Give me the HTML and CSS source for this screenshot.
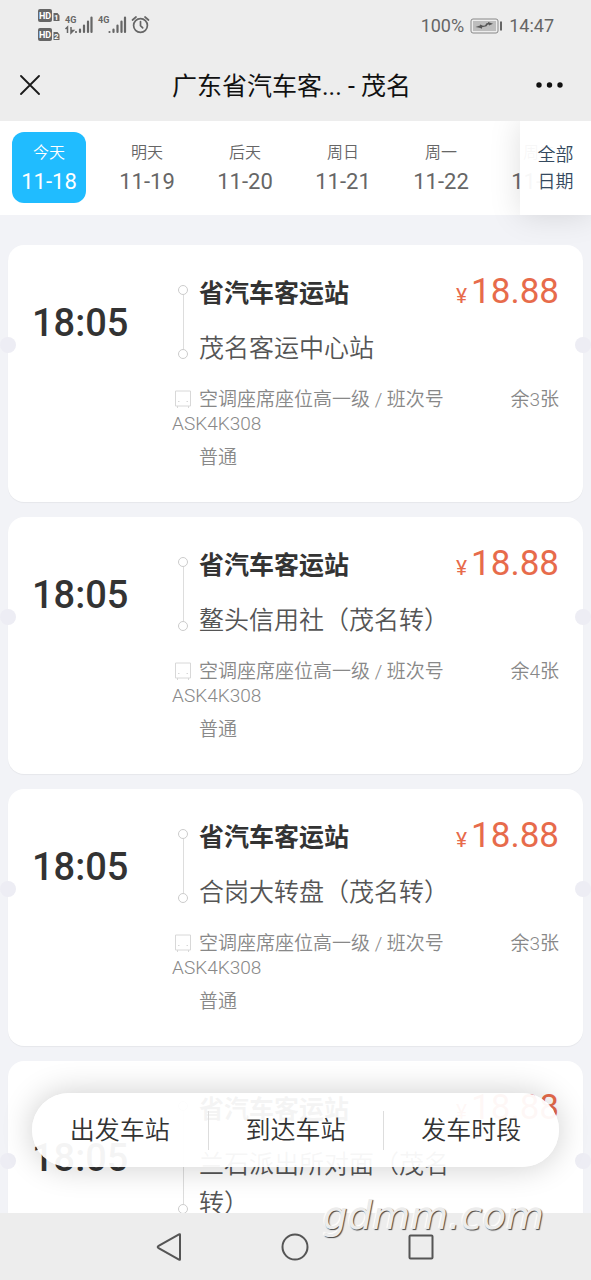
FILE: index.html
```html
<!DOCTYPE html>
<html lang="zh-CN">
<head>
<meta charset="utf-8">
<meta name="viewport" content="width=device-width, initial-scale=1">
<title>广东省汽车客... - 茂名</title>
<link rel="stylesheet" href="styles.css">
</head>
<body>
<div class="app">
  <header class="header">
    <div class="status">
      <svg class="status-icons" width="112" height="34" viewBox="0 0 112 34" aria-hidden="true">
        <g fill="#666">
          <rect x="0" y="0" width="14" height="13" rx="2"/>
          <rect x="0" y="19" width="14" height="13" rx="2"/>
          <path d="M15.500 4h4l2 2.500v5.500h-6zM15.500 23h4l2 2.500v5.500h-6z"/>
          <g class="svg-hd"><text x="1" y="10">HD</text><text x="1" y="29">HD</text></g>
          <g class="svg-num"><text x="16" y="11">1</text><text x="16" y="30">2</text></g>
          <g class="svg-4g"><text x="27" y="14">4G</text><text x="60" y="14">4G</text></g>
        </g>
        <g stroke="#666" stroke-width="2.200" stroke-linecap="round" fill="none">
          <path d="M38 23v0M42 20.500v2.500M46 16.500v6.500M50 12.500v10.500M53.500 8.500v14.500"/>
          <path d="M71.500 23v0M75.500 20.500v2.500M79.500 16.500v6.500M83.500 12.500v10.500M87 8.500v14.500"/>
        </g>
        <path d="M27.500 20l2-2v6M33 18v6l2.500-2.500h-2.500" stroke="#666" stroke-width="1.500" fill="none"/>
        <g stroke="#666" stroke-width="1.700" fill="none" stroke-linecap="round">
          <circle cx="102.500" cy="16.500" r="6.900"/>
          <path d="M102.500 12.500v4.200l2.200 2.200M94.500 11l3.500-3M110.500 11l-3.500-3"/>
        </g>
      </svg>
      <div class="status-right">
        <span>100%</span>
        <svg width="33" height="16" viewBox="0 0 33 16" aria-hidden="true">
          <rect x="1" y="1" width="27" height="14" rx="2" fill="#ededed" stroke="#888"/>
          <rect x="3" y="3" width="23" height="10" fill="#bdbdbd"/>
          <path d="M5.500 9l4.500-1.500v-1l3 1.200 2-.2 1.500-2.300 1.500-.2v-1l5 1.800-4 1.700v-1l-1.500.3-1 1.500-4.500 1v1.500l-2.500-1z" fill="#555"/>
          <rect x="30" y="3.500" width="2" height="9" fill="#666"/>
        </svg>
        <span>14:47</span>
      </div>
    </div>
    <div class="titlebar">
      <button class="icon-button" aria-label="关闭">
        <svg width="20" height="20" viewBox="0 0 20 20"><path d="M1 1l18 18M19 1L1 19" stroke="#1a1a1a" stroke-width="1.800" stroke-linecap="round"/></svg>
      </button>
      <h1 class="title">广东省汽车客... - 茂名</h1>
      <button class="icon-button more" aria-label="更多">
        <svg width="27" height="6" viewBox="0 0 27 6" fill="#111"><circle cx="3" cy="3" r="2.700"/><circle cx="13.500" cy="3" r="2.700"/><circle cx="24" cy="3" r="2.700"/></svg>
      </button>
    </div>
  </header>

  <nav class="dates" aria-label="日期">
    <div class="date-strip">
      <button class="date active"><span class="day">今天</span><span class="num">11-18</span></button>
      <button class="date"><span class="day">明天</span><span class="num">11-19</span></button>
      <button class="date"><span class="day">后天</span><span class="num">11-20</span></button>
      <button class="date"><span class="day">周日</span><span class="num">11-21</span></button>
      <button class="date"><span class="day">周一</span><span class="num">11-22</span></button>
      <button class="date"><span class="day">周二</span><span class="num">11-23</span></button>
    </div>
    <button class="all-dates">全部<br>日期</button>
  </nav>

  <main class="list">
    <article class="card">
      <time class="time">18:05</time>
      <div class="route">
        <div class="track"><i class="stop"></i><i class="line"></i><i class="stop"></i></div>
        <div class="stations"><h2 class="from">省汽车客运站</h2><p class="to">茂名客运中心站</p></div>
      </div>
      <div class="price"><span class="yen">¥</span>18.88</div>
      <div class="info">
        <p class="detail"><svg class="bus" width="18" height="18" viewBox="0 0 18 18"><path d="M1.500 1h15v15h-15zM3.500 16v2M14.500 16v2M4 11.500h1.500M12.500 11.500h1.500"/></svg>空调座席座位高一级 / 班次号 ASK4K308</p>
        <p class="kind">普通</p>
      </div>
      <div class="left">余3张</div>
    </article>
    <article class="card">
      <time class="time">18:05</time>
      <div class="route">
        <div class="track"><i class="stop"></i><i class="line"></i><i class="stop"></i></div>
        <div class="stations"><h2 class="from">省汽车客运站</h2><p class="to">鳌头信用社（茂名转）</p></div>
      </div>
      <div class="price"><span class="yen">¥</span>18.88</div>
      <div class="info">
        <p class="detail"><svg class="bus" width="18" height="18" viewBox="0 0 18 18"><path d="M1.500 1h15v15h-15zM3.500 16v2M14.500 16v2M4 11.500h1.500M12.500 11.500h1.500"/></svg>空调座席座位高一级 / 班次号 ASK4K308</p>
        <p class="kind">普通</p>
      </div>
      <div class="left">余4张</div>
    </article>
    <article class="card">
      <time class="time">18:05</time>
      <div class="route">
        <div class="track"><i class="stop"></i><i class="line"></i><i class="stop"></i></div>
        <div class="stations"><h2 class="from">省汽车客运站</h2><p class="to">合岗大转盘（茂名转）</p></div>
      </div>
      <div class="price"><span class="yen">¥</span>18.88</div>
      <div class="info">
        <p class="detail"><svg class="bus" width="18" height="18" viewBox="0 0 18 18"><path d="M1.500 1h15v15h-15zM3.500 16v2M14.500 16v2M4 11.500h1.500M12.500 11.500h1.500"/></svg>空调座席座位高一级 / 班次号 ASK4K308</p>
        <p class="kind">普通</p>
      </div>
      <div class="left">余3张</div>
    </article>
    <article class="card">
      <time class="time">18:05</time>
      <div class="route">
        <div class="track"><i class="stop"></i><i class="line"></i><i class="stop"></i></div>
        <div class="stations"><h2 class="from">省汽车客运站</h2><p class="to">兰石派出所对面（茂名转）</p></div>
      </div>
      <div class="price"><span class="yen">¥</span>18.88</div>
    </article>
  </main>

  <div class="filters">
    <button class="filter">出发车站</button>
    <button class="filter">到达车站</button>
    <button class="filter">发车时段</button>
  </div>

  <footer class="navbar">
    <button class="icon-button" aria-label="返回"><svg width="26" height="28" viewBox="0 0 26 28"><path d="M24 1.800v24.400q0 1-1 .5L2.200 14.800q-1-.8 0-1.600L23 1.300q1-.5 1 .5z"/></svg></button>
    <button class="icon-button" aria-label="主页"><svg width="28" height="28" viewBox="0 0 28 28"><circle cx="14" cy="14" r="12.500"/></svg></button>
    <button class="icon-button" aria-label="最近任务"><svg width="26" height="26" viewBox="0 0 26 26"><rect x="1.500" y="1.500" width="23" height="23" rx="1"/></svg></button>
  </footer>
  <div class="watermark">gdmm.com</div>
</div>
</body>
</html>
```
FILE: styles.css
```css
* { box-sizing: border-box; }

body, h1, h2, p { margin: 0; }

body {
  font-family: Roboto, "Noto Sans CJK SC", sans-serif;
  color: #333;
  background: #f2f3f7;
}

button {
  margin: 0;
  padding: 0;
  border: 0;
  background: none;
  color: inherit;
  font: inherit;
}

svg { display: block; }

.app {
  position: relative;
  display: flex;
  flex-direction: column;
  height: 100vh;
  overflow: hidden;
}

/* Status and title */
.header { background: #ededed; }

.status {
  display: flex;
  justify-content: space-between;
  align-items: center;
  height: 51px;
  padding: 0 37px 0 38px;
  color: #666;
  font-size: 18px;
}

.status-right {
  display: flex;
  align-items: center;
  gap: 6px;
}

.svg-hd { fill: #fff; font-size: 9px; font-weight: 700; }
.svg-num { fill: #fff; font-size: 8px; font-weight: 700; }
.svg-4g { font-size: 9px; font-weight: 700; }

.titlebar {
  display: grid;
  grid-template-columns: 1fr auto 1fr;
  align-items: center;
  height: 70px;
  padding: 0 28px 2px 20px;
}

.title {
  padding-top: 4px;
  color: #111;
  font-size: 25px;
  font-weight: 400;
  line-height: 36px;
}

.more { justify-self: end; }
.titlebar .icon-button:first-child { justify-self: start; }

/* Date picker */
.dates {
  position: relative;
  z-index: 1;
  background: #fff;
}

.date-strip {
  display: flex;
  gap: 24px;
  padding: 11px 12px 12px;
  overflow: hidden;
}

.date {
  flex: 0 0 74px;
  display: flex;
  flex-direction: column;
  align-items: center;
  height: 71px;
  padding-top: 7px;
  border-radius: 12px;
  color: #666;
}

.date.active {
  background: #20bcff;
  color: #fff;
}

.day { font-size: 16px; font-weight: 350; line-height: 28px; }
.num { font-size: 22px; line-height: 30px; }

.all-dates {
  position: absolute;
  top: 0;
  right: 0;
  bottom: 0;
  width: 71px;
  background: rgba(255, 255, 255, .95);
  box-shadow: 0 0 32px rgba(0, 0, 0, .13);
  clip-path: inset(0 0 -40px -40px);
  color: #34495e;
  font-size: 18px;
  font-weight: 350;
  line-height: 27px;
}

/* Tickets */
.list {
  flex: 1;
  min-height: 0;
  display: flex;
  flex-direction: column;
  gap: 15px;
  padding: 30px 8px 0;
  overflow: hidden;
}

.card {
  position: relative;
  flex: none;
  display: grid;
  grid-template-columns: 140px 1fr auto;
  row-gap: 20px;
  padding: 29px 24px 32px;
  border-radius: 16px;
  background: #fff;
  box-shadow: 0 1px 1px rgba(0, 0, 0, .05);
}

.card::before,
.card::after {
  content: "";
  position: absolute;
  top: 92px;
  width: 16px;
  height: 16px;
  border-radius: 50%;
  background: #ededf4;
}

.card::before { left: -8px; }
.card::after { right: -8px; }

.time {
  align-self: center;
  padding-top: 3px;
  font-size: 38px;
  font-weight: 500;
  line-height: 44px;
}

.route { display: flex; }

.track {
  display: flex;
  flex-direction: column;
  align-items: center;
  width: 27px;
  padding: 11px 5px 9px 0;
}

.stop {
  width: 10px;
  height: 10px;
  border: 1px solid #ccc;
  border-radius: 50%;
}

.line {
  flex: 1;
  width: 1px;
  background: #ddd;
}

.stations {
  flex: 1;
  display: flex;
  flex-direction: column;
  gap: 16px;
  font-size: 25px;
  line-height: 39px;
}

.from {
  font-size: 25px;
  font-weight: 700;
}

.to {
  color: #555;
  font-weight: 350;
}

.price {
  color: #e76b4b;
  font-size: 35px;
  line-height: 36px;
}

.yen {
  margin-right: 4px;
  font-size: 21px;
}

.info {
  grid-column: 2;
  color: #888;
  font-size: 19px;
  font-weight: 350;
  line-height: 24px;
}

.bus {
  display: inline-block;
  margin: 0 7px 0 2px;
  vertical-align: -2px;
  fill: none;
  stroke: #d8d8d8;
}

.kind {
  margin-top: 10px;
  padding-left: 27px;
}

.left {
  color: #888;
  font-size: 19px;
  font-weight: 350;
  line-height: 24px;
  text-align: right;
}

/* Floating filters */
.filters {
  position: absolute;
  right: 32px;
  bottom: 113px;
  left: 32px;
  display: flex;
  height: 74px;
  border-radius: 37px;
  background: rgba(255, 255, 255, .95);
  box-shadow: 0 0 32px rgba(0, 0, 0, .2);
}

.filter {
  flex: 1;
  display: flex;
  align-items: center;
  justify-content: center;
  padding-bottom: 4px;
  font-size: 25px;
  font-weight: 350;
}

.filter + .filter {
  background: linear-gradient(#ddd, #ddd) left center / 1px 39px no-repeat;
}

/* System navigation */
.navbar {
  position: relative;
  display: flex;
  align-items: center;
  justify-content: center;
  gap: 99px;
  height: 67px;
  padding-right: 2px;
  background: #ededed;
}

.navbar svg {
  fill: none;
  stroke: #555;
  stroke-width: 2;
}

.watermark {
  position: absolute;
  right: 47px;
  bottom: 36px;
  color: #ececec;
  font: italic 39px/56px "DejaVu Sans", sans-serif;
  text-shadow: 1px 1px 1px #444, -1px -1px 1px #fff;
}
```
